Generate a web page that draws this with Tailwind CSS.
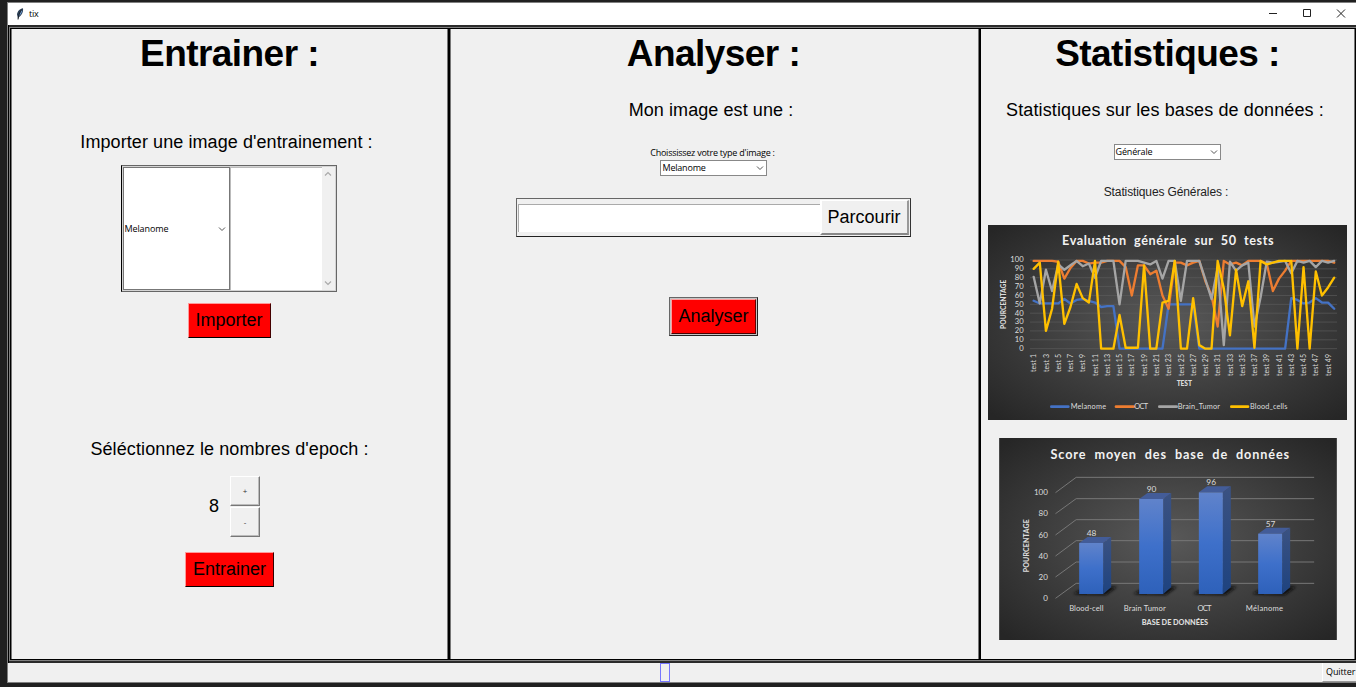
<!DOCTYPE html>
<html lang="fr">
<head>
<meta charset="utf-8">
<title>tix</title>
<script src="https://cdn.jsdelivr.net/npm/@tailwindcss/browser@4"></script>
</head>
<body class="w-[1356px] h-[687px] overflow-hidden bg-[#202020] pt-[2px] pl-[7px] font-['Liberation_Sans',Arial,sans-serif] text-black">
<div class="w-[1349px] h-[681px] border-l border-y border-[#808080] flex flex-col bg-[#f0f0f0]">
  <header class="h-[22px] shrink-0 bg-white flex items-center">
    <svg class="ml-2 w-[8px] h-[12px] shrink-0" viewBox="0 0 8 12"><path d="M7 .2C4 .6 1.400 3 1 6.500L1.600 9 2 11.800 3 9C5.500 7.500 7.600 4 7 .2Z" fill="#2b3e55"/><path d="M6.300 1.200C5 3 3.500 5.500 2.700 8.300 5 6.500 6.300 4 6.300 1.200Z" fill="#6f9bd0"/><path d="M5.800 1.500C4 4 2.500 7 2 11.500" fill="none" stroke="#111" stroke-width=".7"/></svg>
    <span class="ml-[5px] font-['Open_Sans',sans-serif] text-[9px] leading-[22px] tracking-[-0.2px]">tix</span>
    <svg class="ml-auto w-[90px] h-[22px] shrink-0" viewBox="0 0 90 22" fill="none" stroke="#222" stroke-width="1"><path d="M3 10.500h8M37.500 6.500h7v7h-7zM71 6.500l8 8M79 6.500l-8 8"/></svg>
  </header>
  <main class="h-[638px] shrink-0 border-l border-black bg-[#2b2b2b] pt-[2px] pb-[2px]">
    <div class="h-[634px] border-l border-y border-[#808080]">
      <div class="h-[632px] border-l border-y border-r border-black flex">
        <section class="w-[437px] shrink-0 border-x border-[#777] bg-[#f0f0f0] flex flex-col items-center">
          <h1 class="mt-px h-[48px] leading-[48px] text-[37px] font-bold tracking-[-0.55px] whitespace-nowrap">Entrainer :</h1>
          <p class="mt-[52px] mr-[6px] h-[24px] leading-[24px] text-[18px] tracking-[0.080px] whitespace-nowrap">Importer une image d'entrainement :</p>
          <div class="mt-[11px] mr-[2px] w-[216px] h-[127px] border border-[#666] border-l-black bg-[#d4d4d4] p-px flex">
            <div class="w-[108px] h-[123px] border border-[#777] bg-white flex items-center justify-between pl-px pr-[3px]">
              <span class="font-['Open_Sans',sans-serif] text-[9px] tracking-[-0.1px]">Melanome</span>
              <svg class="w-[8px] h-[6px]" viewBox="0 0 8 6" fill="none" stroke="#555" stroke-width="1"><path d="M1 1.500l3 3 3-3"/></svg>
            </div>
            <div class="w-[92px] h-[123px] border-l border-t border-[#bbb] bg-white"></div>
            <div class="w-[13px] h-[123px] bg-[#f0f0f0] flex flex-col justify-between items-center py-[4px]">
              <svg class="w-[8px] h-[6px]" viewBox="0 0 8 6" fill="none" stroke="#aaa" stroke-width="1.200"><path d="M1 4.500l3-3 3 3"/></svg>
              <svg class="w-[8px] h-[6px]" viewBox="0 0 8 6" fill="none" stroke="#aaa" stroke-width="1.200"><path d="M1 1.500l3 3 3-3"/></svg>
            </div>
          </div>
          <button class="mt-[11px] mr-px w-[83px] h-[35px] bg-[#f00] border border-[#ff9a9a] border-r-[#400] border-b-black text-[18px] leading-[33px] whitespace-nowrap">Importer</button>
          <p class="mt-[99px] h-[24px] leading-[24px] text-[18px] tracking-[0.110px] whitespace-nowrap">Séléctionnez le nombres d'epoch :</p>
          <div class="mt-[15px] ml-[10px] flex items-center gap-[11px]">
            <span class="-mt-px text-[18px] leading-[24px]">8</span>
            <div class="flex flex-col gap-px font-['Open_Sans',sans-serif] text-[8px] text-[#333]">
              <button class="w-[30px] h-[30px] border border-white border-r-[#777] border-b-[#777] shadow-[inset_-1px_-1px_#bbb]">+</button>
              <button class="w-[30px] h-[30px] border border-white border-r-[#777] border-b-[#777] shadow-[inset_-1px_-1px_#bbb]">-</button>
            </div>
          </div>
          <button class="mt-[15px] w-[89px] h-[35px] bg-[#f00] border border-[#ff9a9a] border-r-[#300] border-b-black text-[18px] leading-[33px] whitespace-nowrap">Entrainer</button>
        </section>
        <div class="w-[2px] shrink-0 bg-black"></div>
        <section class="w-[529px] shrink-0 border-x border-[#777] bg-[#f0f0f0] flex flex-col items-center">
          <h1 class="mt-px mr-[2px] h-[48px] leading-[48px] text-[37px] font-bold tracking-[-0.55px] whitespace-nowrap">Analyser :</h1>
          <p class="mt-[20px] mr-[7px] h-[24px] leading-[24px] text-[18px] tracking-[0.080px] whitespace-nowrap">Mon image est une :</p>
          <p class="mt-[24px] mr-[4px] h-[14px] leading-[14px] font-['Open_Sans',sans-serif] text-[9px] tracking-[-0.250px] whitespace-nowrap">Choississez votre type d'image :</p>
          <div class="mr-[3px] w-[107px] h-[16px] border border-[#888] bg-white flex items-center justify-between pl-[2px] pr-[2px]">
            <span class="font-['Open_Sans',sans-serif] text-[9px] leading-[14px] tracking-[-0.2px]">Melanome</span>
            <svg class="w-[8px] h-[6px]" viewBox="0 0 8 6" fill="none" stroke="#555" stroke-width="1"><path d="M1 1.500l3 3 3-3"/></svg>
          </div>
          <div class="mt-[22px] mr-[3px] w-[395px] h-[39px] border border-[#666] border-b-[#222] border-r-[#333] p-px flex items-center">
            <div class="w-[303px] h-[28px] border-l border-t border-[#aaa] bg-white"></div>
            <button class="w-[89px] h-[35px] border-2 border-white border-t border-r-[#999] border-b-[#888] text-[18px] leading-[32px] whitespace-nowrap">Parcourir</button>
          </div>
          <div class="mt-[60px] mr-[2px] w-[89px] h-[39px] border border-[#666] border-b-[#222] border-r-[#222] bg-[#c4c4c4] p-px">
            <button class="w-[85px] h-[35px] bg-[#f00] border border-[#ff9a9a] border-r-[#600] border-b-[#400] text-[18px] leading-[33px] whitespace-nowrap">Analyser</button>
          </div>
        </section>
        <div class="w-[2px] shrink-0 bg-black"></div>
        <section class="w-[374px] shrink-0 border-r border-[#777] bg-[#f0f0f0] flex flex-col items-center">
          <h1 class="mt-px h-[48px] leading-[48px] text-[37px] font-bold tracking-[-0.55px] whitespace-nowrap">Statistiques :</h1>
          <p class="mt-[20px] mr-[5px] h-[24px] leading-[24px] text-[18px] tracking-[0.120px] whitespace-nowrap">Statistiques sur les bases de données :</p>
          <div class="mt-[22px] mr-px w-[107px] h-[16px] border border-[#888] bg-white flex items-center justify-between pl-px pr-[2px]">
            <span class="font-['Open_Sans',sans-serif] text-[9px] leading-[14px] tracking-[-0.150px]">Générale</span>
            <svg class="w-[8px] h-[6px]" viewBox="0 0 8 6" fill="none" stroke="#555" stroke-width="1"><path d="M1 1.500l3 3 3-3"/></svg>
          </div>
          <p class="mt-[23px] mr-[3px] h-[18px] leading-[18px] text-[12px] tracking-[-0.120px] text-[#222] whitespace-nowrap">Statistiques Générales :</p>
          <svg id="tests" class="mt-[24px] w-[359px] h-[195px] shrink-0 font-[Lato,sans-serif]" viewBox="24 15 1077 585" fill="#dcdcdc">
            <defs><radialGradient id="bg" r=".68"><stop offset="0" stop-color="#595959"/><stop offset="1" stop-color="#262626"/></radialGradient></defs>
            <rect x="24" y="15" width="1077" height="585" fill="url(#bg)"/>
            <text x="246" y="74" font-size="38" font-weight="700" fill="#f2f2f2" textLength="635">Evaluation&#160; générale&#160; sur&#160; 50&#160; tests</text>
            <g id="grid" stroke="#5c5c5c" stroke-width="2"></g>
            <g id="yl" font-size="23" text-anchor="end"></g>
            <g id="xl" font-size="21"></g>
            <g id="series" fill="none" stroke-width="7" stroke-linejoin="round" stroke-linecap="round"></g>
            <text transform="translate(78 327) rotate(-90)" font-size="20" font-weight="900" textLength="148">POURCENTAGE</text>
            <text x="590" y="498" font-size="20" font-weight="900" textLength="46">TEST</text>
            <g stroke-width="8" stroke-linecap="round"><path d="M214 560h51" stroke="#4472c4"/><path d="M408 560h53" stroke="#ed7d31"/><path d="M538 560h52" stroke="#a5a5a5"/><path d="M754 560h50" stroke="#ffc000"/></g>
            <g font-size="22"><text x="272" y="566" textLength="106">Melanome</text><text x="463" y="566" textLength="41">OCT</text><text x="593" y="566" textLength="127">Brain_Tumor</text><text x="810" y="566" textLength="112">Blood_cells</text></g>
          </svg>
          <svg id="scores" class="mt-[18px] w-[338px] h-[202px] shrink-0 font-[Lato,sans-serif]" viewBox="27 24 1013 606" fill="#dcdcdc">
            <defs>
              <linearGradient id="front" x2="0" y2="1"><stop offset="0" stop-color="#6083cb"/><stop offset=".5" stop-color="#3e70ca"/><stop offset="1" stop-color="#2e61ba"/></linearGradient>
              <linearGradient id="side" x2="0" y2="1"><stop offset="0" stop-color="#3b5282"/><stop offset="1" stop-color="#1e4380"/></linearGradient>
              <filter id="soft" x="-20%" y="-50%" width="140%" height="200%"><feGaussianBlur stdDeviation="4"/></filter>
            </defs>
            <rect x="27" y="24" width="1013" height="606" fill="url(#bg)"/>
            <text x="181" y="86" font-size="38" font-weight="700" fill="#f2f2f2" textLength="716">Score&#160; moyen&#160; des&#160; base&#160; de&#160; données</text>
            <path d="M196 188L258 142H972M196 251L258 206H972M196 315L258 269H972M196 378L258 332H972M196 441L258 396H972M196 505L258 460H972" fill="none" stroke="#777" stroke-width="3"/>
            <g font-size="24" text-anchor="end"><text x="173" y="196">100</text><text x="173" y="259">80</text><text x="173" y="323">60</text><text x="173" y="386">40</text><text x="173" y="449">20</text><text x="173" y="513">0</text></g>
            <g id="bars"></g>
            <text transform="translate(117 427) rotate(-90)" font-size="21" font-weight="900" textLength="159">POURCENTAGE</text>
            <g font-size="23"><text x="237" y="544" textLength="103">Blood-cell</text><text x="401" y="544" textLength="126">Brain Tumor</text><text x="622" y="544" textLength="42">OCT</text><text x="767" y="544" textLength="112">Mélanome</text></g>
            <text x="455" y="584" font-size="22" font-weight="900" textLength="199">BASE DE DONNÉES</text>
          </svg>
        </section>
      </div>
    </div>
  </main>
  <footer class="h-[19px] shrink-0 flex items-stretch">
    <div class="ml-[652px] w-[10px] border border-[#7777ff]"></div>
    <button class="ml-auto w-[34px] border-l border-l-white border-b border-b-[#999] font-['Open_Sans',sans-serif] text-[9px] leading-[18px] tracking-[-0.1px] whitespace-nowrap text-left pl-[3px]">Quitter</button>
  </footer>
</div>
<script>
const NS = 'http://www.w3.org/2000/svg';
function add(parent, tag, attrs, text) {
  const e = document.createElementNS(NS, tag);
  for (const k in attrs) e.setAttribute(k, attrs[k]);
  if (text !== undefined) e.textContent = text;
  document.getElementById(parent).appendChild(e);
}
const X = n => 161 + 18.4 * (n - 1), Y = v => 386 - 2.66 * v;
for (let v = 0; v <= 100; v += 10) {
  add('grid', 'path', { d: `M150 ${Y(v)}H1071` });
  add('yl', 'text', { x: 131, y: Y(v) + 7 }, v);
}
for (let n = 1; n < 50; n += 2) {
  const len = n < 10 ? 54 : 66;
  add('xl', 'text', { transform: `translate(${X(n) + 8} ${402 + len}) rotate(-90)`, textLength: len }, 'test ' + n);
}
const series = [
  ['#4472c4', [54,51,51,51,51,56,51,55,56,54,52,47,48,48,0,0,0,0,0,0,0,0,50,50,50,50,50,0,0,0,0,0,0,0,0,0,0,0,0,0,0,0,57,55,51,52,57,52,52,45]],
  ['#ed7d31', [99,99,99,99,98,79,91,99,99,96,97,97,99,99,99,92,60,94,94,84,88,60,45,97,97,94,97,99,76,60,25,99,95,97,94,99,99,99,96,65,79,88,99,99,99,99,99,99,99,97]],
  ['#a5a5a5', [81,51,89,65,95,89,94,99,93,96,80,99,99,99,50,99,99,99,97,95,99,79,99,99,54,99,99,99,78,56,91,4,98,88,94,97,25,58,98,97,98,99,85,99,97,99,92,99,97,99]],
  ['#ffc000', [90,97,20,45,98,28,47,73,57,52,99,0,0,0,38,1,1,1,94,0,0,52,54,99,0,0,57,4,0,0,99,68,15,89,48,76,1,99,95,97,99,99,99,0,92,0,87,60,69,80]]
];
for (const [stroke, data] of series)
  add('series', 'polyline', { stroke, points: data.map((v, i) => X(i + 1) + ',' + Y(v)).join(' ') });
for (const [x, y, v] of [[267,339,48],[447,207,90],[626,187,96],[804,311,57]]) {
  add('bars', 'path', { d: `M${x - 18} 492L${x + 20} 470H${x + 114}L${x + 80} 495Z`, fill: '#111', filter: 'url(#soft)' });
  add('bars', 'path', { d: `M${x + 72} ${y}l24 -18V472L${x + 72} 492Z`, fill: 'url(#side)' });
  add('bars', 'path', { d: `M${x} ${y}l25 -18h71l-24 18Z`, fill: '#435c98' });
  add('bars', 'rect', { x, y, width: 72, height: 492 - y, fill: 'url(#front)' });
  add('bars', 'text', { x: x + 37, y: y - 21, 'font-size': 25, 'text-anchor': 'middle' }, v);
}
</script>
</body>
</html>
